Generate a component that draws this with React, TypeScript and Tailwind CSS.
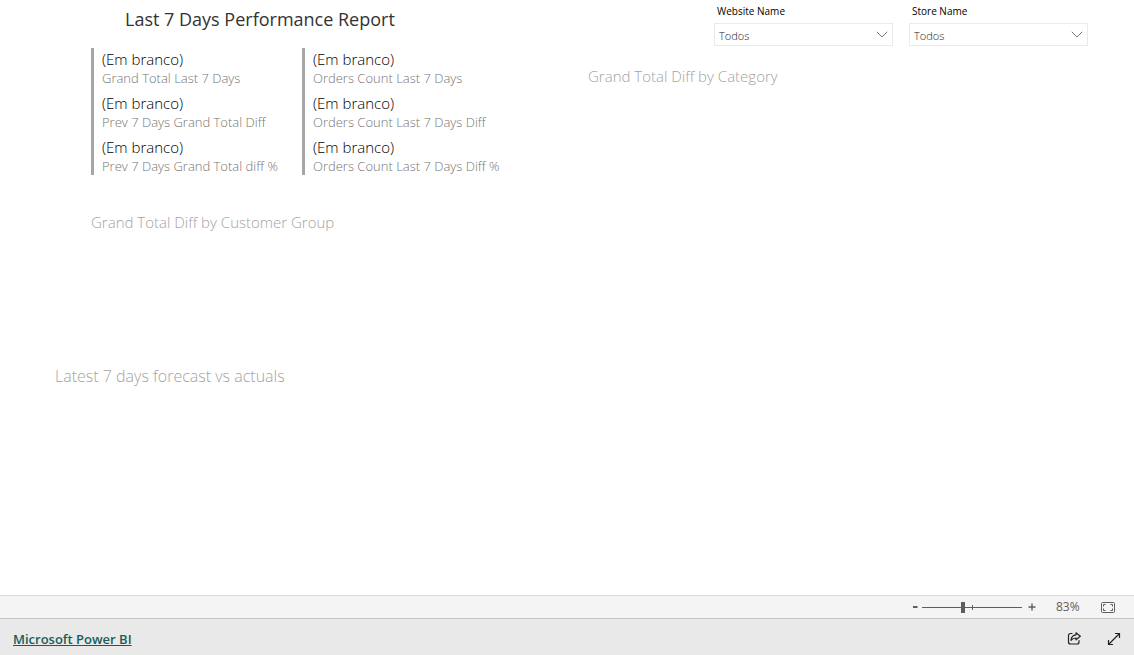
import React, { useState } from 'react';

const grandTotals = [
  { value: '(Em branco)', label: 'Grand Total Last 7 Days' },
  { value: '(Em branco)', label: 'Prev 7 Days Grand Total Diff' },
  { value: '(Em branco)', label: 'Prev 7 Days Grand Total diff %' },
];

const orderCounts = [
  { value: '(Em branco)', label: 'Orders Count Last 7 Days' },
  { value: '(Em branco)', label: 'Orders Count Last 7 Days Diff' },
  { value: '(Em branco)', label: 'Orders Count Last 7 Days Diff %' },
];

type Kpi = { value: string; label: string };

function KpiCard({ items }: { items: Kpi[] }) {
  return (
    <dl className="flex w-[211px] flex-col gap-[5px] border-l-3 border-[#a6a6a6] pl-2 whitespace-nowrap">
      {items.map((item) => (
        <div key={item.label} className="flex flex-col-reverse">
          <dt className="text-[13px] leading-[17px] font-light text-[#757575]">{item.label}</dt>
          <dd className="text-[15px] leading-[22px] font-light text-black">{item.value}</dd>
        </div>
      ))}
    </dl>
  );
}

function Slicer({ id, label }: { id: string; label: string }) {
  return (
    <div className="w-[179px]">
      <label htmlFor={id} className="block pl-[3px] text-[10px] leading-[14px] text-black">
        {label}
      </label>
      <div className="relative mt-[5px]">
        <select
          id={id}
          className="block h-[23px] w-full appearance-none border border-[#eaeaea] bg-white pt-[3px] pl-1 text-[11px] font-light text-[#1c1c1c]"
        >
          <option>Todos</option>
        </select>
        <svg
          className="pointer-events-none absolute top-2 right-[5px] h-[7px] w-3"
          viewBox="0 0 12 7"
          fill="none"
          stroke="#777777"
          strokeWidth="1"
        >
          <path d="M0.8 0.8L6 6l5.2-5.2" />
        </svg>
      </div>
    </div>
  );
}

function App() {
  const [zoom, setZoom] = useState(83);

  return (
    <div className="flex min-h-screen flex-col bg-white font-['Open_Sans','Noto_Sans',sans-serif]">
      <main className="grid flex-1 grid-cols-2 content-start">
        <div>
          <h1 className="pt-[6px] pl-[125px] text-[18px] leading-[26px] text-[#333333]">
            Last 7 Days Performance Report
          </h1>
          <div className="mt-4 flex pl-[91px]">
            <KpiCard items={grandTotals} />
            <KpiCard items={orderCounts} />
          </div>
          <h2 className="mt-9 pl-[91px] text-[15px] leading-[22px] font-light text-[#a3a3a3]">
            Grand Total Diff by Customer Group
          </h2>
          <h2 className="mt-[132px] pl-[55px] text-[16px] leading-[22px] font-light text-[#a3a3a3]">
            Latest 7 days forecast vs actuals
          </h2>
        </div>
        <div>
          <div className="flex justify-end gap-4 pt-1 pr-[46px]">
            <Slicer id="website" label="Website Name" />
            <Slicer id="store" label="Store Name" />
          </div>
          <h2 className="mt-[19px] pl-[21px] text-[15px] leading-[22px] font-light text-[#a3a3a3]">
            Grand Total Diff by Category
          </h2>
        </div>
      </main>

      <div className="flex h-[23px] items-center justify-end border-t border-[#dcdcdc] bg-[#f4f4f4] pr-[19px] text-[#605e5c]">
        <button type="button" aria-label="Zoom out" className="flex h-4 w-4 items-center justify-center">
          <svg className="h-[9px] w-[9px]" viewBox="0 0 9 9" stroke="currentColor" strokeWidth="2">
            <path d="M3 4h4.5" />
          </svg>
        </button>
        <div className="relative flex items-center">
          <input
            type="range"
            aria-label="Zoom"
            min={10}
            max={190}
            value={zoom}
            onChange={(e) => setZoom(Number(e.target.value))}
            className="h-[11px] w-[100px] appearance-none bg-transparent [&::-webkit-slider-runnable-track]:h-px [&::-webkit-slider-runnable-track]:bg-[#605e5c] [&::-webkit-slider-thumb]:-mt-[5px] [&::-webkit-slider-thumb]:h-[11px] [&::-webkit-slider-thumb]:w-1 [&::-webkit-slider-thumb]:appearance-none [&::-webkit-slider-thumb]:bg-[#605e5c]"
          />
          <span className="pointer-events-none absolute left-1/2 h-[5px] w-px bg-[#605e5c]" />
        </div>
        <button type="button" aria-label="Zoom in" className="ml-[2px] flex h-4 w-4 items-center justify-center">
          <svg className="h-[9px] w-[9px]" viewBox="0 0 9 9" stroke="currentColor" strokeWidth="1.4">
            <path d="M0.5 4h7M4 0.5v7" />
          </svg>
        </button>
        <span className="ml-4 w-[26px] text-[12px] leading-4">{zoom}%</span>
        <button type="button" aria-label="Fit to page" className="ml-[19px]">
          <svg className="block h-[11px] w-[14px]" viewBox="0 0 14 11" fill="none" stroke="currentColor">
            <rect x="0.5" y="0.5" width="13" height="10" rx="1" />
            <path d="M2.5 4.5v-2h2M9.5 2.5h2v2M11.5 6.5v2h-2M4.5 8.5h-2v-2" />
          </svg>
        </button>
      </div>

      <footer className="flex h-[37px] items-center border-t border-[#c4c4c4] bg-[#e9e9e9] pt-1 pr-[13px] pl-[13px]">
        <a href="#" className="text-[13px] leading-5 font-semibold text-[#175e5a] underline">
          Microsoft Power BI
        </a>
        <button type="button" aria-label="Share" className="ml-auto">
          <svg
            className="block h-[14px] w-[14px]"
            viewBox="0 0 14 14"
            fill="none"
            stroke="#222222"
            strokeWidth="1.2"
            strokeLinejoin="round"
            strokeLinecap="round"
          >
            <path d="M5 1.5H3.5A2 2 0 0 0 1.5 3.5v6.500a2 2 0 0 0 2 2h6.500a2 2 0 0 0 2-2V8.500" />
            <path d="M9 0.8L13.3 4.3 9 7.8V6C6.8 6 5.5 6.5 4 8.3 4.3 5 6 3 9 2.8z" />
          </svg>
        </button>
        <button type="button" aria-label="Full screen" className="ml-[26px]">
          <svg
            className="block h-[14px] w-[14px]"
            viewBox="0 0 14 14"
            fill="none"
            stroke="#222222"
            strokeWidth="1.2"
          >
            <path d="M1.5 12.5L12.5 1.5M8 1.5h4.5V6M1.5 8v4.5H6" />
          </svg>
        </button>
      </footer>
    </div>
  );
}

export default App;
